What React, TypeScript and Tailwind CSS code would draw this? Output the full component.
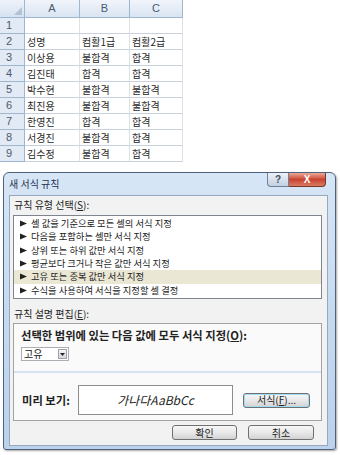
import React from 'react';

const rows = [
  ['', '', ''],
  ['성명', '컴활1급', '컴활2급'],
  ['이상용', '불합격', '합격'],
  ['김진태', '합격', '합격'],
  ['박수현', '불합격', '불합격'],
  ['최진용', '불합격', '불합격'],
  ['한영진', '합격', '합격'],
  ['서경진', '불합격', '합격'],
  ['김수정', '불합격', '합격'],
];

const ruleTypes = [
  '셀 값을 기준으로 모든 셀의 서식 지정',
  '다음을 포함하는 셀만 서식 지정',
  '상위 또는 하위 값만 서식 지정',
  '평균보다 크거나 작은 값만 서식 지정',
  '고유 또는 중복 값만 서식 지정',
  '수식을 사용하여 서식을 지정할 셀 결정',
];

const Arrow = () => (
  <svg width="7" height="7" viewBox="0 0 7 7" className="shrink-0">
    <polygon points="0,0.5 7,3.5 0,6.5" fill="#222" />
  </svg>
);

function Sheet() {
  return (
    <div className="grid w-[183px] grid-cols-[25px_55px_50px_53px] text-[10px] leading-none text-[#2a2a2a]">
      <div className="relative h-[18px] border-b border-r border-[#9eb6ce] bg-linear-to-b from-[#eef3fa] to-[#d6e2f1]">
        <svg width="8" height="8" viewBox="0 0 8 8" className="absolute bottom-[2px] right-[2px]">
          <polygon points="8,0 8,8 0,8" fill="#b4c2d3" />
        </svg>
      </div>
      {['A', 'B', 'C'].map((c) => (
        <div
          key={c}
          className="flex h-[18px] items-center justify-center border-b border-r border-[#9eb6ce] bg-linear-to-b from-[#f1f5fb] to-[#d9e4f2] font-['Liberation_Sans',sans-serif] text-[11px] text-[#4a5a70]"
        >
          {c}
        </div>
      ))}
      {rows.map((r, i) => (
        <React.Fragment key={i}>
          <div className="flex h-[16px] items-center border-b border-r border-[#9eb6ce] bg-[#e2eaf5] pl-[6px] font-['Liberation_Sans',sans-serif] text-[11px] text-[#4a5a70]">
            {i + 1}
          </div>
          {r.map((cell, j) => (
            <div
              key={j}
              className="flex h-[16px] items-center overflow-hidden whitespace-nowrap border-b border-r border-b-[#c8d1dd] border-r-[#dde2e9] border-r-dotted pl-[2px]"
            >
              {cell}
            </div>
          ))}
        </React.Fragment>
      ))}
    </div>
  );
}

const Button = ({ children, className = '' }: { children: React.ReactNode; className?: string }) => (
  <div
    className={`flex items-center justify-center rounded-[3px] border border-[#707070] bg-linear-to-b from-[#f7f7f7] via-[#e8e8e8] to-[#d2d2d2] text-[10px] leading-none text-[#222] ${className}`}
  >
    {children}
  </div>
);

function Dialog() {
  return (
    <div className="ml-[3px] mt-[10px] flex h-[278px] w-[333px] flex-col rounded-t-[6px] rounded-b-[3px] border border-[#4f627c] bg-linear-to-b from-[#d7e6f6] via-[#c6daef] to-[#bcd2ea] pb-[3px] pl-[5px] pr-[7px] shadow-[1px_1px_2px_rgba(0,0,0,0.35)]">
      {/* title bar */}
      <div className="flex h-[22px] items-start">
        <span className="pt-[6px] text-[10px] leading-none text-[#1e3450]">새 서식 규칙</span>
        <div className="ml-auto mr-[2px] flex">
          <div className="flex h-[14px] w-[22px] items-center justify-center rounded-bl-[4px] border border-t-0 border-[#6f819a] bg-linear-to-b from-[#edf2f8] to-[#c3d1e3] font-['Liberation_Sans',sans-serif] text-[10px] font-bold leading-none text-[#3d4c60]">
            ?
          </div>
          <div className="flex h-[14px] w-[37px] items-center justify-center rounded-br-[4px] border border-l-0 border-t-0 border-[#7a3528] bg-linear-to-b from-[#e9a898] via-[#c8432f] to-[#d97a63] font-['Liberation_Sans',sans-serif] text-[10px] font-bold leading-none text-white">
            X
          </div>
        </div>
      </div>

      {/* content */}
      <div className="flex flex-1 flex-col border border-[#93a9c2] bg-[#f2f2f2] pl-[3px] pr-[5px] text-[10px] leading-none text-[#222]">
        <div className="mt-[4px] h-[12px] pl-[1px]">
          규칙 유형 선택(<span className="underline">S</span>):
        </div>
        <div className="mt-[3px] flex h-[84px] w-[309px] flex-col border border-[#7f858e] bg-white py-[1px] text-[9.3px]">
          {ruleTypes.map((t, i) => (
            <div
              key={t}
              className={`flex h-[13.6px] items-center gap-[4px] pl-[6px] ${i === 4 ? 'bg-[#ebe7d5]' : ''}`}
            >
              <Arrow />
              <span>{t}</span>
            </div>
          ))}
        </div>

        <div className="mt-[10px] h-[12px] pl-[1px]">
          규칙 설명 편집(<span className="underline">E</span>):
        </div>
        <div className="mt-[2px] flex h-[98px] w-[309px] flex-col border border-[#a2a2a2] bg-[#fafafa]">
          <div className="pl-[7px] pt-[6px] text-[11.3px] font-bold">
            선택한 범위에 있는 다음 값에 모두 서식 지정(<span className="underline">O</span>):
          </div>
          <div className="ml-[7px] mt-[6px] flex h-[14px] w-[48px] items-center justify-between border border-[#acaeb4] bg-white pl-[2px] pr-[1px]">
            <span>고유</span>
            <div className="flex h-[10px] w-[9px] items-center justify-center border border-[#9aa2ad] bg-linear-to-b from-[#f6f6f6] to-[#d8d8d8]">
              <svg width="5" height="3" viewBox="0 0 5 3">
                <polygon points="0,0 5,0 2.5,3" fill="#222" />
              </svg>
            </div>
          </div>
          <div className="mt-[10px] h-[2px] bg-[#d5e4f3]" />
          <div className="flex items-center pl-[8px] pt-[12px]">
            <span className="w-[56px] text-[11.3px] font-bold">미리 보기:</span>
            <div className="flex h-[30px] w-[155px] items-center justify-center border border-[#8c8c8c] bg-white text-[12px] italic">
              가나다AaBbCc
            </div>
            <Button className="ml-[10px] h-[15px] w-[67px] border-[#3b7fb2] shadow-[inset_0_0_0_1px_#9fdcf5]">
              서식(<span className="underline">F</span>)...
            </Button>
          </div>
        </div>

        <div className="mt-[4px] flex justify-end gap-[11px] pr-[8px]">
          <Button className="h-[15px] w-[65px]">확인</Button>
          <Button className="h-[15px] w-[66px]">취소</Button>
        </div>
      </div>
    </div>
  );
}

export default function App() {
  return (
    <div className="h-[455px] w-[340px] overflow-hidden bg-white font-['Noto_Sans_CJK_KR',sans-serif]">
      <Sheet />
      <Dialog />
    </div>
  );
}
